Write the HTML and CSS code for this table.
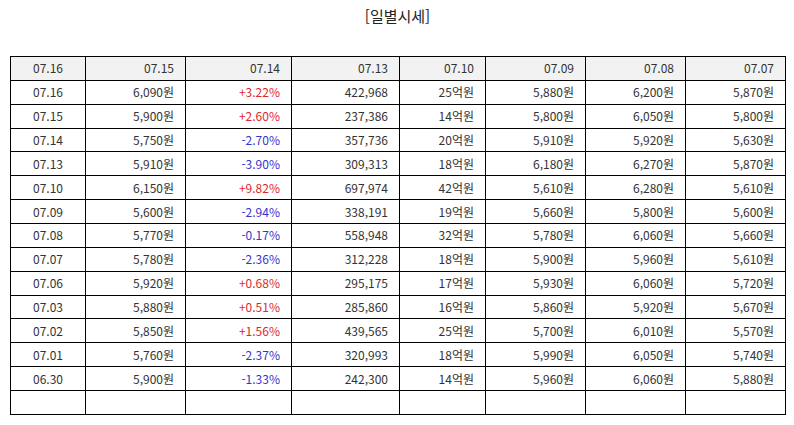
FILE: index.html
```html
<!DOCTYPE html>
<html lang="ko">
<head>
<meta charset="utf-8">
<link rel="stylesheet" href="styles.css">
</head>
<body>
<div class="page">
  <h1 class="title">[일별시세]</h1>
  <table class="prices">
    <colgroup>
      <col class="c1"><col class="c2"><col class="c3"><col class="c4"><col class="c5"><col class="c6"><col class="c7"><col class="c8">
    </colgroup>
    <thead>
      <tr><th class="center">07.16</th><th>07.15</th><th>07.14</th><th>07.13</th><th>07.10</th><th>07.09</th><th>07.08</th><th>07.07</th></tr>
    </thead>
    <tbody>
      <tr><td class="center">07.16</td><td>6,090원</td><td class="up">+3.22%</td><td>422,968</td><td>25억원</td><td>5,880원</td><td>6,200원</td><td>5,870원</td></tr>
      <tr><td class="center">07.15</td><td>5,900원</td><td class="up">+2.60%</td><td>237,386</td><td>14억원</td><td>5,800원</td><td>6,050원</td><td>5,800원</td></tr>
      <tr><td class="center">07.14</td><td>5,750원</td><td class="down">-2.70%</td><td>357,736</td><td>20억원</td><td>5,910원</td><td>5,920원</td><td>5,630원</td></tr>
      <tr><td class="center">07.13</td><td>5,910원</td><td class="down">-3.90%</td><td>309,313</td><td>18억원</td><td>6,180원</td><td>6,270원</td><td>5,870원</td></tr>
      <tr><td class="center">07.10</td><td>6,150원</td><td class="up">+9.82%</td><td>697,974</td><td>42억원</td><td>5,610원</td><td>6,280원</td><td>5,610원</td></tr>
      <tr><td class="center">07.09</td><td>5,600원</td><td class="down">-2.94%</td><td>338,191</td><td>19억원</td><td>5,660원</td><td>5,800원</td><td>5,600원</td></tr>
      <tr><td class="center">07.08</td><td>5,770원</td><td class="down">-0.17%</td><td>558,948</td><td>32억원</td><td>5,780원</td><td>6,060원</td><td>5,660원</td></tr>
      <tr><td class="center">07.07</td><td>5,780원</td><td class="down">-2.36%</td><td>312,228</td><td>18억원</td><td>5,900원</td><td>5,960원</td><td>5,610원</td></tr>
      <tr><td class="center">07.06</td><td>5,920원</td><td class="up">+0.68%</td><td>295,175</td><td>17억원</td><td>5,930원</td><td>6,060원</td><td>5,720원</td></tr>
      <tr><td class="center">07.03</td><td>5,880원</td><td class="up">+0.51%</td><td>285,860</td><td>16억원</td><td>5,860원</td><td>5,920원</td><td>5,670원</td></tr>
      <tr><td class="center">07.02</td><td>5,850원</td><td class="up">+1.56%</td><td>439,565</td><td>25억원</td><td>5,700원</td><td>6,010원</td><td>5,570원</td></tr>
      <tr><td class="center">07.01</td><td>5,760원</td><td class="down">-2.37%</td><td>320,993</td><td>18억원</td><td>5,990원</td><td>6,050원</td><td>5,740원</td></tr>
      <tr><td class="center">06.30</td><td>5,900원</td><td class="down">-1.33%</td><td>242,300</td><td>14억원</td><td>5,960원</td><td>6,060원</td><td>5,880원</td></tr>
      <tr><td></td><td></td><td></td><td></td><td></td><td></td><td></td><td></td></tr>
    </tbody>
  </table>
</div>
</body>
</html>
```

FILE: styles.css
```css
html, body {
  margin: 0;
  padding: 0;
  background: #ffffff;
}

.page {
  padding: 0 9px 0 10px;
  font-family: "Noto Sans CJK KR", "Noto Sans", sans-serif;
  color: #333333;
}

.title {
  margin: 0;
  padding-top: 6px;
  height: 56px;
  box-sizing: border-box;
  text-align: center;
  font-size: 15px;
  font-weight: normal;
  line-height: 20px;
  color: #222222;
}

.prices {
  width: 775px;
  border-collapse: collapse;
  table-layout: fixed;
  font-size: 12px;
}

.c1 { width: 75px; }
.c2 { width: 100px; }
.c3 { width: 106px; }
.c4 { width: 108px; }
.c5 { width: 86px; }
.c6 { width: 100px; }
.c7 { width: 100px; }
.c8 { width: 100px; }

.prices th,
.prices td {
  border: 1px solid #000000;
  height: 22.87px;
  padding: 0 11px 0 4px;
  text-align: right;
  font-weight: normal;
  line-height: 14px;
  white-space: nowrap;
}

.prices th {
  background: #f2f2f2;
}

.prices th.center,
.prices td.center {
  text-align: center;
  padding: 0 4px;
}

.prices .up { color: #e0282e; }
.prices .down { color: #3535d0; }
```
